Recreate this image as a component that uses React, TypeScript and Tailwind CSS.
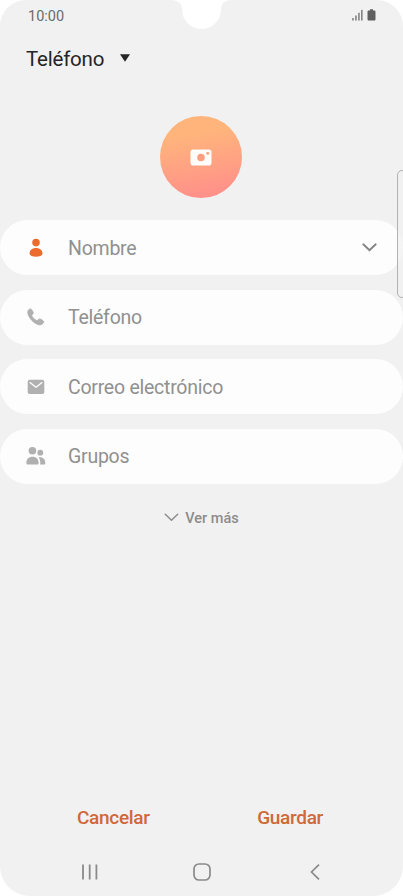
import { useState } from "react";
import type { ReactNode } from "react";

const PersonIcon = () => (
  <svg viewBox="0 0 20 20" className="w-5 h-5 fill-[#ec6c2d]">
    <circle cx="10" cy="4.6" r="3.8" />
    <path d="M3.6 15.2c0-3 2.7-5.2 6.4-5.2s6.4 2.2 6.4 5.2c0 2.400-2.500 3.500-6.400 3.500s-6.400-1.100-6.400-3.500z" />
  </svg>
);

const PhoneIcon = () => (
  <svg
    viewBox="0 0 20 20"
    className="w-5 h-5 fill-[#b0b0b0] stroke-[#b0b0b0]"
    strokeWidth="0.9"
    strokeLinejoin="round"
  >
    <path d="M2.800 2.600c.9-.9 2.100-.8 2.800.1l1.300 2c.6.9.4 1.800-.3 2.500l-.6.7c-.3.4-.3.800 0 1.300.9 1.600 2.500 3.200 4.200 4.200.5.3 1 .3 1.300-.1l.8-.7c.7-.7 1.600-.8 2.500-.3l2.100 1.300c1 .7 1.100 1.800.2 2.700l-.8.7c-1.100 1-2.700 1.100-4.400.5-4.500-1.800-8-5.400-9.700-9.800-.7-1.700-.5-4.100.6-5.100z" />
  </svg>
);

const MailIcon = () => (
  <svg viewBox="0 0 20 20" className="w-5 h-5">
    <rect x="1.7" y="2.7" width="16.6" height="14.3" rx="2" className="fill-[#b0b0b0]" />
    <path
      d="M4 5.6l6 4.700 6-4.700"
      fill="none"
      stroke="#fdfdfd"
      strokeWidth="1.3"
      strokeLinecap="round"
      strokeLinejoin="round"
    />
  </svg>
);

const GroupIcon = () => (
  <svg viewBox="0 0 20 20" className="w-5 h-5 overflow-visible fill-[#b0b0b0]">
    <circle cx="6.4" cy="4.8" r="3.8" />
    <circle cx="14.3" cy="6.700" r="2.900" />
    <path d="M.4 16.900c0-4 2.400-6.200 6.100-6.200s6.100 2.200 6.100 6.200c0 1-.5 1.500-1.500 1.500H1.900c-1 0-1.500-.5-1.500-1.500z" />
    <path d="M12.500 11.300c4-.8 6.800 1.500 6.800 5.600 0 1-.5 1.500-1.400 1.500h-4c.3-.5.4-1 .4-1.500 0-2.400-.5-4.200-1.800-5.600z" />
  </svg>
);

const fields: { id: string; label: string; icon: ReactNode }[] = [
  { id: "name", label: "Nombre", icon: <PersonIcon /> },
  { id: "phone", label: "Teléfono", icon: <PhoneIcon /> },
  { id: "email", label: "Correo electrónico", icon: <MailIcon /> },
  { id: "groups", label: "Grupos", icon: <GroupIcon /> },
];

const StatusBar = () => (
  <div className="flex h-8 items-center justify-between pl-7 pr-[27px] text-[#6b6b6b]">
    <span className="pt-px text-[14.5px] leading-5">10:00</span>
    <div className="-mt-0.5 flex items-center gap-1">
      <svg viewBox="0 0 11 12" className="w-[11px] h-3 fill-current">
        <rect x="0.3" y="9" width="1.3" height="2.5" />
        <rect x="3.3" y="6.5" width="1.3" height="5" />
        <rect x="6.3" y="3.8" width="1.3" height="7.7" />
        <rect x="9.2" y="0.9" width="1.3" height="10.6" />
      </svg>
      <svg viewBox="0 0 9 12" className="w-[9px] h-3 fill-[#606060]">
        <path d="M3 .3h3v1.300h1.200c.8 0 1.300.5 1.300 1.300v7.400c0 .8-.5 1.300-1.300 1.300H1.800c-.8 0-1.300-.5-1.300-1.300V2.900c0-.8.5-1.300 1.300-1.300H3z" />
      </svg>
    </div>
  </div>
);

const App = () => {
  const [values, setValues] = useState<Record<string, string>>({});

  return (
    <div className="w-[403px] h-[896px] bg-white font-[Roboto,sans-serif]">
      <form
        className="relative flex flex-col w-full h-full overflow-hidden rounded-t-[26px] rounded-b-[30px] bg-[#f1f1f1]"
        onSubmit={(e) => e.preventDefault()}
      >
        {/* camera notch */}
        <svg
          viewBox="0 0 60 30"
          className="absolute left-[171px] top-0 w-[60px] h-[30px] fill-white"
        >
          <path d="M0 0c7 0 10.800 3.500 11 9.500C11.300 21 20 29 30.500 29S49.700 21 50 9.500C50.200 3.500 54 0 60 0z" />
        </svg>
        <StatusBar />

        {/* storage account */}
        <button type="button" className="mt-[11px] ml-[26px] flex w-fit items-center gap-4 text-[#252525]">
          <span className="text-[20.5px] leading-8 tracking-[-0.2px]">Teléfono</span>
          <svg viewBox="0 0 10 8" className="-mt-0.5 w-2.5 h-2 fill-current">
            <path d="M0 .3h10L5 7.700z" />
          </svg>
        </button>

        {/* contact photo */}
        <button
          type="button"
          className="mt-[41px] mr-px flex h-[82px] w-[82px] items-center justify-center self-center rounded-full bg-linear-[170deg] from-[#ffb47c] from-25% to-[#ff8b8b]"
        >
          <svg viewBox="0 0 22 17" className="w-[22px] h-[17px]">
            <rect x="0.5" y="0.5" width="21" height="16" rx="2.8" fill="#fffdfc" />
            <circle cx="11" cy="8.5" r="3.8" fill="#ff9f80" />
            <circle cx="17.7" cy="4.3" r="1.5" fill="#ffa383" />
          </svg>
        </button>

        <div className="mt-[22px] flex flex-col gap-[14.5px]">
          {fields.map(({ id, label, icon }) => (
            <label
              key={id}
              className="flex h-[55px] items-center rounded-full bg-[#fdfdfd] pl-[26px] pr-[26px]"
            >
              {icon}
              <input
                type="text"
                value={values[id] ?? ""}
                placeholder={label}
                onChange={(e) =>
                  setValues({ ...values, [id]: e.currentTarget.value })
                }
                className="ml-[22px] min-w-0 flex-1 bg-transparent pt-0.5 text-[19.5px] tracking-[-0.25px] text-[#444] outline-none placeholder:text-[#909090]"
              />
              {id === "name" && (
                <svg viewBox="0 0 15 9" className="w-[15px] h-[9px]">
                  <path
                    d="M1.300 1.300l6.200 6 6.200-6"
                    fill="none"
                    stroke="#858585"
                    strokeWidth="1.9"
                    strokeLinecap="round"
                    strokeLinejoin="round"
                  />
                </svg>
              )}
            </label>
          ))}
        </div>

        <button type="button" className="mt-[24px] flex h-5 items-center gap-1.5 self-center text-[#8c8c8c]">
          <svg viewBox="0 0 15 9" className="w-[15px] h-[9px]">
            <path
              d="M1.300 1.300l6.200 6 6.200-6"
              fill="none"
              stroke="currentColor"
              strokeWidth="1.5"
              strokeLinecap="round"
              strokeLinejoin="round"
            />
          </svg>
          <span className="pt-0.5 text-[14.5px] font-medium leading-5">Ver más</span>
        </button>

        {/* form actions */}
        <div className="mt-auto flex justify-between pl-[77px] pr-[80px] text-[19px] font-medium leading-7 tracking-[-0.3px] text-[#d0683a]">
          <button type="button">Cancelar</button>
          <button type="submit">Guardar</button>
        </div>

        {/* navigation bar */}
        <nav className="mt-[17px] mb-0.5 flex h-[45px] items-center justify-between pl-[80px] pr-[78px] text-[#8a8a8a]">
          <svg viewBox="0 0 20 20" className="w-5 h-5" fill="none" stroke="currentColor" strokeWidth="1.8">
            <path d="M3 2.500v15M9.700 2.500v15M16.400 2.500v15" />
          </svg>
          <svg viewBox="0 0 20 20" className="mr-px w-5 h-5" fill="none" stroke="currentColor" strokeWidth="1.7">
            <rect x="2" y="2" width="16" height="16" rx="5" />
          </svg>
          <svg viewBox="0 0 20 20" className="w-5 h-5" fill="none" stroke="currentColor" strokeWidth="1.7">
            <path d="M14 2.700L6.500 10l7.500 7.300" />
          </svg>
        </nav>

        {/* edge panel handle */}
        <div className="absolute top-[170px] -right-1 h-[128px] w-[10px] rounded-[5px] border border-[#b2b2b2] bg-[#f1f1f1]/70" />
      </form>
    </div>
  );
};

export default App;
